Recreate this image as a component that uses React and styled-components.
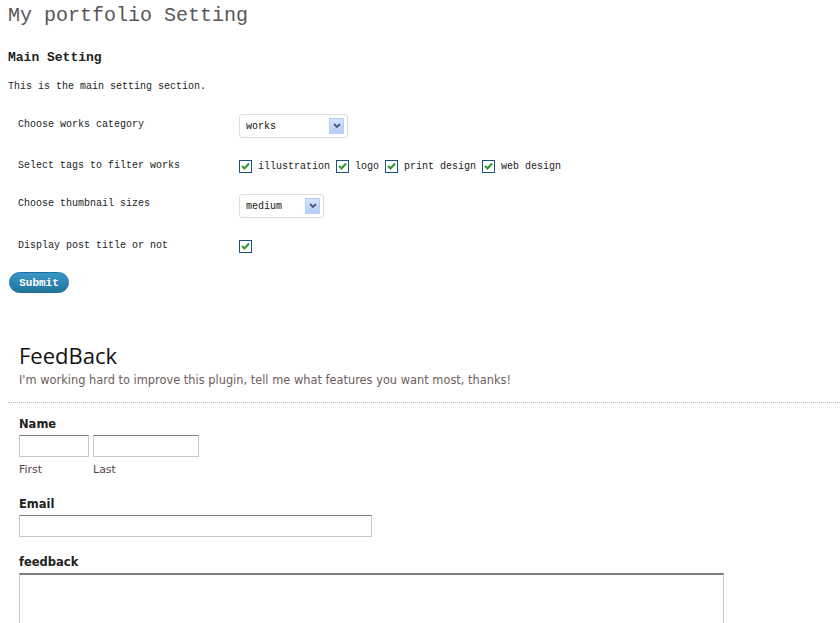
import styled, { createGlobalStyle } from "styled-components";

const Global = createGlobalStyle`
  html, body { margin: 0; padding: 0; background: #fff; }
  body { overflow: hidden; }
`;

const Page = styled.div`
  width: 840px;
  height: 623px;
  overflow: hidden;
  font-family: "Liberation Mono", "DejaVu Sans Mono", monospace;
  color: #333;
`;

const Settings = styled.div`
  padding: 0 8px;
`;

const Title = styled.h2`
  margin: 0;
  padding-top: 4px;
  font-size: 20px;
  font-weight: normal;
  line-height: 24px;
  color: #575757;
`;

const SectionTitle = styled.h3`
  margin: 22px 0 0;
  font-size: 13px;
  line-height: 16px;
  font-weight: bold;
  color: #222;
`;

const Intro = styled.p`
  margin: 14px 0 0;
  font-size: 10px;
  line-height: 14px;
  color: #222;
`;

const Table = styled.div`
  margin-top: 12px;
  display: flex;
  flex-direction: column;
`;

const Row = styled.div`
  display: flex;
  align-items: center;
  height: ${(p) => p.$h}px;
`;

const Label = styled.div`
  width: 221px;
  padding-left: 10px;
  font-size: 10px;
  color: #222;
  margin-top: ${(p) => p.$lift || -3}px;
`;

const Controls = styled.div`
  display: flex;
  align-items: center;
  gap: 6px;
  font-size: 10px;
  color: #222;
`;

const SelectBox = styled.div`
  box-sizing: border-box;
  width: ${(p) => p.$w}px;
  height: 24px;
  border: 1px solid #dcdcdc;
  border-radius: 3px;
  display: flex;
  align-items: center;
  justify-content: space-between;
  padding: 0 3px 0 6px;
  font-size: 10px;
  color: #111;
  background: #fff;
`;

const Arrow = styled.span`
  width: 15px;
  height: 16px;
  box-sizing: border-box;
  border: 1px solid #b8cdf5;
  background: linear-gradient(#d6e3fd, #b4cbf7);
  display: flex;
  align-items: center;
  justify-content: center;
`;

const Tag = styled.label`
  display: flex;
  align-items: center;
  gap: 6px;
`;

const Box = styled.span`
  width: 13px;
  height: 13px;
  box-sizing: border-box;
  border: 1px solid #1c5180;
  background: #fff;
  display: flex;
  align-items: center;
  justify-content: center;
`;

const Submit = styled.button`
  margin: 6px 0 0 1px;
  width: 60px;
  height: 21px;
  border: 1px solid #1d6fa0;
  border-radius: 11px;
  background: linear-gradient(#3a97c9, #21759b);
  color: #fff;
  font-family: "Liberation Mono", monospace;
  font-weight: bold;
  font-size: 11px;
  padding: 0;
`;

const Feedback = styled.div`
  margin-top: 49px;
  font-family: "DejaVu Sans", Verdana, sans-serif;
`;

const FeedHead = styled.div`
  margin-left: 8px;
  padding: 0 19px 14px 11px;
  border-bottom: 1px dotted #bbb;
`;

const FeedTitle = styled.h2`
  margin: 0;
  font-family: "Open Sans", "DejaVu Sans", sans-serif;
  font-size: 22px;
  font-weight: normal;
  line-height: 26px;
  color: #111;
`;

const FeedSub = styled.p`
  margin: 4px 0 0;
  font-size: 11.4px;
  line-height: 16px;
  color: #6e5d5e;
`;

const Form = styled.div`
  padding: 13px 19px 0;
  display: flex;
  flex-direction: column;
`;

const Field = styled.div`
  margin-bottom: ${(p) => p.$mb || 0}px;
`;

const FieldLabel = styled.div`
  font-size: 11.5px;
  font-weight: bold;
  line-height: 16px;
  color: #222;
  margin-bottom: 3px;
`;

const NameRow = styled.div`
  display: flex;
  gap: 4px;
`;

const Input = styled.div`
  box-sizing: border-box;
  width: ${(p) => p.$w}px;
  height: ${(p) => p.$h || 22}px;
  border: 1px solid #c8c8c8;
  border-top: ${(p) => (p.$thick ? 2 : 1)}px solid #7d7d7d;
  background: #fff;
`;

const Sub = styled.span`
  display: inline-block;
  width: ${(p) => p.$w}px;
  font-size: 11px;
  line-height: 16px;
  color: #5b4545;
  margin-top: 5px;
`;

const Check = () => (
  <svg width="9" height="8" viewBox="0 0 9 8">
    <path d="M1 4 L3.5 6.5 L8 1.5" fill="none" stroke="#2c9a2c" strokeWidth="2" />
  </svg>
);

const Chevron = () => (
  <svg width="8" height="6" viewBox="0 0 8 6">
    <path d="M1 1 L4 4 L7 1" fill="none" stroke="#4d5a78" strokeWidth="1.8" />
  </svg>
);

const Select = ({ value, width }) => (
  <SelectBox $w={width}>
    <span>{value}</span>
    <Arrow>
      <Chevron />
    </Arrow>
  </SelectBox>
);

const CheckBox = ({ children }) => (
  <Tag>
    <Box>
      <Check />
    </Box>
    {children}
  </Tag>
);

export default function App() {
  const tags = ["illustration", "logo", "print design", "web design"];
  return (
    <Page>
      <Global />
      <Settings>
        <Title>My portfolio Setting</Title>
        <SectionTitle>Main Setting</SectionTitle>
        <Intro>This is the main setting section.</Intro>
        <Table>
          <Row $h={40}>
            <Label>Choose works category</Label>
            <Controls>
              <Select value="works" width={109} />
            </Controls>
          </Row>
          <Row $h={40}>
            <Label $lift={-2}>Select tags to filter works</Label>
            <Controls>
              {tags.map((t) => (
                <CheckBox key={t}>{t}</CheckBox>
              ))}
            </Controls>
          </Row>
          <Row $h={40}>
            <Label $lift={-5}>Choose thumbnail sizes</Label>
            <Controls>
              <Select value="medium" width={85} />
            </Controls>
          </Row>
          <Row $h={40}>
            <Label $lift={-1}>Display post title or not</Label>
            <Controls>
              <CheckBox />
            </Controls>
          </Row>
        </Table>
        <Submit>Submit</Submit>
      </Settings>

      <Feedback>
        <FeedHead>
          <FeedTitle>FeedBack</FeedTitle>
          <FeedSub>
            I'm working hard to improve this plugin, tell me what features you want most, thanks!
          </FeedSub>
        </FeedHead>
        <Form>
          <Field $mb={18}>
            <FieldLabel>Name</FieldLabel>
            <NameRow>
              <Input $w={70} />
              <Input $w={106} />
            </NameRow>
            <Sub $w={74}>First</Sub>
            <Sub $w={60}>Last</Sub>
          </Field>
          <Field $mb={17}>
            <FieldLabel>Email</FieldLabel>
            <Input $w={353} />
          </Field>
          <Field>
            <FieldLabel>feedback</FieldLabel>
            <Input $w={705} $h={80} $thick />
          </Field>
        </Form>
      </Feedback>
    </Page>
  );
}
